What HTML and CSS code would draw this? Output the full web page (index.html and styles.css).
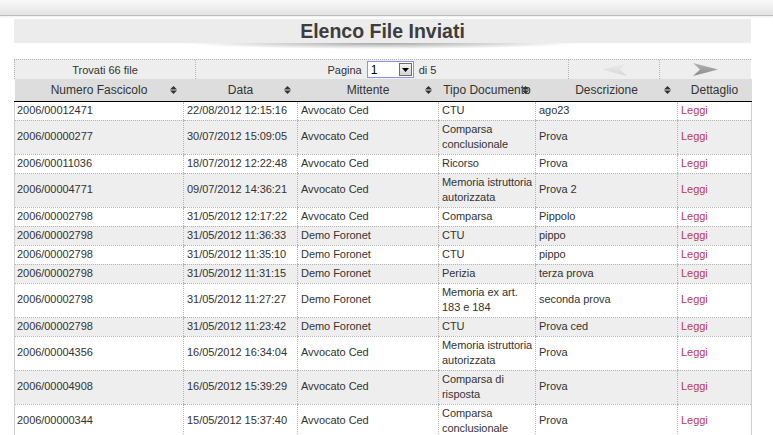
FILE: index.html
```html
<!DOCTYPE html>
<html lang="it">
<head>
<meta charset="utf-8">
<title>Elenco File Inviati</title>
<link rel="stylesheet" href="styles.css">
</head>
<body>
<div class="topbar"></div>
<div class="page">
  <div class="titlebar"><h1 class="title">Elenco File Inviati</h1></div>

  <div class="pager">
    <div class="pg-cell pg-found">Trovati 66 file</div>
    <div class="pg-cell pg-page">
      <span>Pagina</span>
      <span class="sel"><span class="sel-val">1</span><span class="sel-btn"><svg width="7" height="4" viewBox="0 0 7 4"><polygon points="0,0 7,0 3.5,4" fill="#000"/></svg></span></span>
      <span>di 5</span>
    </div>
    <div class="pg-cell pg-arrow">
      <svg width="25" height="13" viewBox="0 0 25 13"><defs><linearGradient id="gp" x1="0" y1="0" x2="0" y2="1"><stop offset="0" stop-color="#ececec"/><stop offset="1" stop-color="#d6d6d6"/></linearGradient></defs><polygon points="25,0 0,6.5 25,13 18,6.5" fill="url(#gp)"/></svg>
    </div>
    <div class="pg-cell pg-arrow">
      <svg width="25" height="13" viewBox="0 0 25 13"><defs><linearGradient id="gn" x1="0" y1="0" x2="0" y2="1"><stop offset="0" stop-color="#b4b4b4"/><stop offset="1" stop-color="#8a8a8a"/></linearGradient></defs><polygon points="0,0 25,6.5 0,13 7,6.5" fill="url(#gn)"/></svg>
    </div>
  </div>

  <table class="grid">
    <colgroup>
      <col class="c1"><col class="c2"><col class="c3"><col class="c4"><col class="c5"><col class="c6">
    </colgroup>
    <thead>
      <tr>
        <th>Numero Fascicolo<svg class="sort" width="7" height="8" viewBox="0 0 7 8"><polygon points="0,3.5 3.5,0 7,3.5" /><polygon points="0,4.5 7,4.5 3.5,8" /></svg></th>
        <th>Data<svg class="sort" width="7" height="8" viewBox="0 0 7 8"><polygon points="0,3.5 3.5,0 7,3.5" /><polygon points="0,4.5 7,4.5 3.5,8" /></svg></th>
        <th>Mittente<svg class="sort" width="7" height="8" viewBox="0 0 7 8"><polygon points="0,3.5 3.5,0 7,3.5" /><polygon points="0,4.5 7,4.5 3.5,8" /></svg></th>
        <th>Tipo Documento<svg class="sort" width="7" height="8" viewBox="0 0 7 8"><polygon points="0,3.5 3.5,0 7,3.5" /><polygon points="0,4.5 7,4.5 3.5,8" /></svg></th>
        <th>Descrizione<svg class="sort" width="7" height="8" viewBox="0 0 7 8"><polygon points="0,3.5 3.5,0 7,3.5" /><polygon points="0,4.5 7,4.5 3.5,8" /></svg></th>
        <th>Dettaglio</th>
      </tr>
    </thead>
    <tbody>
      <tr><td>2006/00012471</td><td>22/08/2012 12:15:16</td><td>Avvocato Ced</td><td>CTU</td><td>ago23</td><td><a href="#">Leggi</a></td></tr>
      <tr><td>2006/00000277</td><td>30/07/2012 15:09:05</td><td>Avvocato Ced</td><td>Comparsa conclusionale</td><td>Prova</td><td><a href="#">Leggi</a></td></tr>
      <tr><td>2006/00011036</td><td>18/07/2012 12:22:48</td><td>Avvocato Ced</td><td>Ricorso</td><td>Prova</td><td><a href="#">Leggi</a></td></tr>
      <tr><td>2006/00004771</td><td>09/07/2012 14:36:21</td><td>Avvocato Ced</td><td>Memoria istruttoria autorizzata</td><td>Prova 2</td><td><a href="#">Leggi</a></td></tr>
      <tr><td>2006/00002798</td><td>31/05/2012 12:17:22</td><td>Avvocato Ced</td><td>Comparsa</td><td>Pippolo</td><td><a href="#">Leggi</a></td></tr>
      <tr><td>2006/00002798</td><td>31/05/2012 11:36:33</td><td>Demo Foronet</td><td>CTU</td><td>pippo</td><td><a href="#">Leggi</a></td></tr>
      <tr><td>2006/00002798</td><td>31/05/2012 11:35:10</td><td>Demo Foronet</td><td>CTU</td><td>pippo</td><td><a href="#">Leggi</a></td></tr>
      <tr><td>2006/00002798</td><td>31/05/2012 11:31:15</td><td>Demo Foronet</td><td>Perizia</td><td>terza prova</td><td><a href="#">Leggi</a></td></tr>
      <tr><td>2006/00002798</td><td>31/05/2012 11:27:27</td><td>Demo Foronet</td><td>Memoria ex art. 183 e 184</td><td>seconda prova</td><td><a href="#">Leggi</a></td></tr>
      <tr><td>2006/00002798</td><td>31/05/2012 11:23:42</td><td>Demo Foronet</td><td>CTU</td><td>Prova ced</td><td><a href="#">Leggi</a></td></tr>
      <tr><td>2006/00004356</td><td>16/05/2012 16:34:04</td><td>Avvocato Ced</td><td>Memoria istruttoria autorizzata</td><td>Prova</td><td><a href="#">Leggi</a></td></tr>
      <tr><td>2006/00004908</td><td>16/05/2012 15:39:29</td><td>Avvocato Ced</td><td>Comparsa di risposta</td><td>Prova</td><td><a href="#">Leggi</a></td></tr>
      <tr><td>2006/00000344</td><td>15/05/2012 15:37:40</td><td>Avvocato Ced</td><td>Comparsa conclusionale</td><td>Prova</td><td><a href="#">Leggi</a></td></tr>
    </tbody>
  </table>
</div>
</body>
</html>
```

FILE: styles.css
```css
html, body {
  margin: 0;
  padding: 0;
  background: #fff;
  font-family: "Liberation Sans", Arial, sans-serif;
  color: #333;
  overflow: hidden;
}

.topbar {
  height: 15px;
  background: linear-gradient(#f9f9f9, #e3e3e3);
  border-bottom: 1px solid #bdbdbd;
  box-shadow: 0 1px 2px rgba(0,0,0,0.08);
}

.page {
  width: 737px;
  margin: 3px 0 0 14px;
}

.titlebar {
  position: relative;
  height: 24px;
  background: #ececec;
}
.titlebar::after {
  content: "";
  position: absolute;
  left: 170px;
  right: 170px;
  top: 24px;
  height: 6px;
  background: radial-gradient(ellipse 50% 100% at 50% 0, rgba(0,0,0,0.35), rgba(0,0,0,0) 100%);
}

.title {
  margin: 0;
  font-size: 19.5px;
  line-height: 24px;
  font-weight: bold;
  text-align: center;
  color: #3d3d3d;
}

.pager {
  display: flex;
  margin-top: 16px;
  height: 20px;
  background: #eeeeee;
  font-size: 11px;
  color: #333;
  border-top: 1px dotted #b4b4b4;
  box-sizing: border-box;
}
.pg-cell {
  display: flex;
  align-items: center;
  justify-content: center;
  border-left: 1px dotted #b4b4b4;
  box-sizing: border-box;
}
.pg-found { width: 181px; }
.pg-page { width: 373px; gap: 3px; }
.pg-arrow { width: 91px; }
.pg-arrow:last-child { width: 92px; }

.sel {
  display: inline-flex;
  align-items: center;
  width: 47px;
  height: 17px;
  box-sizing: border-box;
  border: 1px solid #8896ee;
  background: #fff;
  margin: 0 2px;
}
.sel-val {
  flex: 1;
  font-size: 12px;
  color: #000;
  padding-left: 3px;
}
.sel-btn {
  display: flex;
  align-items: center;
  justify-content: center;
  width: 13px;
  height: 13px;
  margin-right: 1px;
  box-sizing: border-box;
  border: 1px solid #6d6d6d;
  background: linear-gradient(#f4f4f4, #d4d4d4);
}

.grid {
  width: 737px;
  table-layout: fixed;
  border-collapse: collapse;
  font-size: 11px;
}
.c1 { width: 169px; }
.c2 { width: 114px; }
.c3 { width: 141px; }
.c4 { width: 97px; }
.c5 { width: 142px; }
.c6 { width: 74px; }

.grid th {
  position: relative;
  height: 22px;
  padding: 1px 0 0;
  background: #dddddd;
  font-size: 12px;
  font-weight: normal;
  color: #333;
  text-align: center;
  white-space: nowrap;
  border-bottom: 1px solid #000;
  box-sizing: border-box;
}
.sort {
  position: absolute;
  right: 7px;
  top: 7px;
  fill: #333;
}

.grid td {
  padding: 1px 1px 2px 3px;
  line-height: 15px;
  vertical-align: middle;
  color: #333;
  border-left: 1px dotted #b4b4b4;
  border-bottom: 1px dotted #b4b4b4;
  letter-spacing: -0.05px;
}
.grid td:first-child { border-left: 1px solid #cfcfcf; padding-left: 2px; }
.grid td:last-child { border-right: 1px solid #cfcfcf; }
.grid tbody tr:nth-child(even) td { background: #eeeeee; }

.grid a {
  color: #b83a55;
  text-decoration: none;
}
```
